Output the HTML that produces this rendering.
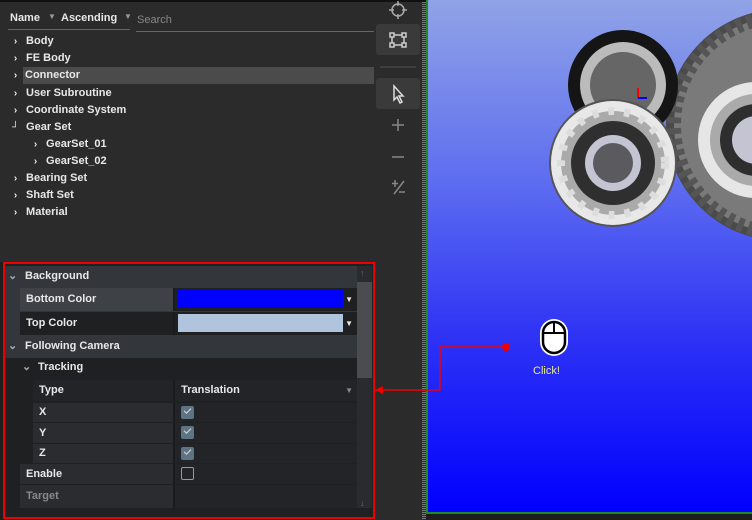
<!DOCTYPE html>
<html><head><style>
*{margin:0;padding:0;box-sizing:border-box}
body{width:752px;height:520px;background:#1e1e1e;position:relative;overflow:hidden;font-family:"Liberation Sans",sans-serif;font-size:11px;font-weight:bold;color:#e8e8e8}
.a{position:absolute}
.tree div{position:absolute;left:0;height:17px;line-height:17px}
.tree span{display:inline-block;width:15px;text-align:center;font-size:10px}
.row{position:absolute;left:4px;width:353px;height:21px;line-height:21px}
.lab{position:absolute;left:16px;width:153px;top:0;bottom:0;background:#2a2c30;padding-left:6px}
.val{position:absolute;left:169px;right:0;top:0;bottom:0;background:#232427;border-left:2px solid #1b1b1b}
.cb{position:absolute;left:6px;top:4px;width:13px;height:13px;background:#5e7482;border-radius:2px}
.cb:after{content:"";position:absolute;left:3px;top:2px;width:6px;height:3px;border-left:1.5px solid #ddd;border-bottom:1.5px solid #ddd;transform:rotate(-45deg)}
</style></head><body>
<div class="a" style="left:0;top:0;width:374px;height:262px;background:#2b2b2b"></div>
<div class="a" style="left:374px;top:0;width:48px;height:520px;background:#2b2b2b"></div>
<div class="a" style="left:422px;top:0;width:4px;height:520px;background:repeating-linear-gradient(#777 0 1px,#2b2b2b 1px 2px)"></div>
<div class="a" style="left:0;top:0;width:426px;height:2px;background:#111"></div>
<div class="a" style="left:10px;top:12px">Name</div>
<div class="a" style="left:48px;top:12px;color:#999;font-size:8px">▼</div>
<div class="a" style="left:61px;top:12px">Ascending</div>
<div class="a" style="left:124px;top:12px;color:#999;font-size:8px">▼</div>
<div class="a" style="left:8px;top:29px;width:122px;height:1px;background:#666"></div>
<div class="a" style="left:137px;top:14px;color:#888;font-weight:normal">Search</div>
<div class="a" style="left:136px;top:31px;width:238px;height:1px;background:#666"></div>
<div class="tree a" style="left:8px;top:33px;width:366px">
<div style="top:0"><span>›</span>&nbsp;Body</div>
<div style="top:17px"><span>›</span>&nbsp;FE Body</div>
<div style="top:34px;left:15px;width:351px;background:#4b4b4b;padding-left:2px">Connector</div>
<div style="top:34px"><span>›</span></div>
<div style="top:52px"><span>›</span>&nbsp;User Subroutine</div>
<div style="top:69px"><span>›</span>&nbsp;Coordinate System</div>
<div style="top:86px"><span>┘</span>&nbsp;Gear Set</div>
<div style="top:103px;left:20px"><span>›</span>&nbsp;GearSet_01</div>
<div style="top:120px;left:20px"><span>›</span>&nbsp;GearSet_02</div>
<div style="top:137px"><span>›</span>&nbsp;Bearing Set</div>
<div style="top:154px"><span>›</span>&nbsp;Shaft Set</div>
<div style="top:171px"><span>›</span>&nbsp;Material</div>
</div>
<svg class="a" style="left:374px;top:0" width="48" height="200" fill="none" stroke="#aaa" stroke-width="1.5">
<circle cx="24" cy="10" r="6"/><path d="M24 1v5M24 14v5M15 10h5M28 10h5"/>
<rect x="2" y="24" width="44" height="31" rx="3" fill="#3a3a3a" stroke="none"/>
<rect x="18" y="35" width="12" height="10" stroke="#ccc"/><rect x="16" y="33" width="4" height="4" fill="#3a3a3a" stroke="#ccc"/><rect x="28" y="33" width="4" height="4" fill="#3a3a3a" stroke="#ccc"/><rect x="16" y="43" width="4" height="4" fill="#3a3a3a" stroke="#ccc"/><rect x="28" y="43" width="4" height="4" fill="#3a3a3a" stroke="#ccc"/>
<path d="M6 67h36" stroke="#444"/>
<rect x="2" y="78" width="44" height="31" rx="3" fill="#3a3a3a" stroke="none"/>
<path d="M20 86l0 14 3-3 3 6 2-1-3-6 4 0z" stroke="#ddd"/>
<path d="M24 119v12M18 125h12M18 157h12" stroke="#888"/>
<path d="M21 180v7M18 183.5h6M30 181l-10 13M25 192h6" stroke="#888"/>
</svg>
<div class="a" style="left:426px;top:0;width:326px;height:514px;background:linear-gradient(#90a3e6,#5e6ef0 35%,#2f34f4 65%,#0000ff);border-left:2px solid #1a8a2a;border-bottom:2px solid #1a8a2a"></div>
<svg class="a" style="left:426px;top:0" width="326" height="260">
<circle cx="356" cy="125" r="116" fill="#4a4a4a"/>
<circle cx="356" cy="125" r="108" fill="#7a7a7a" stroke="#555" stroke-width="14" stroke-dasharray="6 5"/>
<circle cx="330" cy="140" r="58" fill="#e6e6e6"/><circle cx="330" cy="140" r="46" fill="#aaa"/><circle cx="330" cy="140" r="36" fill="#2e2e2e"/><circle cx="330" cy="140" r="24" fill="#c4c4d2"/>
<circle cx="197" cy="85" r="55" fill="#151515"/><circle cx="197" cy="85" r="43" fill="#bbb"/><circle cx="197" cy="85" r="33" fill="#666"/>
<circle cx="187" cy="163" r="64" fill="#555"/>
<circle cx="187" cy="163" r="62" fill="#e8e8e8"/><circle cx="187" cy="163" r="52" fill="#aaa" stroke="#ddd" stroke-width="8" stroke-dasharray="6 10"/>
<circle cx="187" cy="163" r="42" fill="#2f2f2f"/><circle cx="187" cy="163" r="28" fill="#c4c4d2"/><circle cx="187" cy="163" r="20" fill="#5a5a5f"/>
<path d="M212 88v10" stroke="red" stroke-width="2"/><path d="M212 98h9" stroke="blue" stroke-width="2"/>
</svg>
<svg class="a" style="left:374px;top:340px" width="200" height="60">
<path d="M1 50H66V7H132" stroke="#e00" stroke-width="1.5" fill="none"/><circle cx="132" cy="7" r="4" fill="#e00"/>
<path d="M1 50l8-4v8z" fill="#e00"/>
</svg>
<svg class="a" style="left:538px;top:318px" width="32" height="40"><rect x="2" y="1" width="28" height="37" rx="14" fill="#fff"/><rect x="5" y="4" width="22" height="31" rx="11" fill="#fff" stroke="#000" stroke-width="2.5"/><path d="M16 4v11M5 15h22" stroke="#000" stroke-width="2"/></svg>
<div class="a" style="left:533px;top:365px;color:#e8e89a;font-weight:normal;font-size:11px">Click!</div>
<div class="a" style="left:3px;top:262px;width:372px;height:257px;background:#1f2022;border:2px solid #e00"></div>
<div class="a" style="left:5px;top:266px;width:352px;height:92px;background:#33363b"></div>
<div class="a" style="left:357px;top:266px;width:15px;height:242px;background:#2a2b2e"></div>
<div class="a" style="left:357px;top:282px;width:15px;height:96px;background:#4a4c50"></div>
<div class="a" style="left:360px;top:268px;color:#666;font-size:9px">↑</div>
<div class="a" style="left:360px;top:498px;color:#666;font-size:9px">↓</div>
<div class="row" style="top:266px"><span style="position:absolute;left:4px;color:#aaa">⌄</span><span style="position:absolute;left:21px">Background</span></div>
<div class="row" style="top:288px;height:23px;line-height:23px"><div class="lab" style="background:#3e4146">Bottom Color</div><div class="val" style="background:#1f2022"><div class="a" style="left:3px;top:2px;width:165px;height:18px;background:#0000ff"></div><span style="position:absolute;right:4px;font-size:8px">▼</span></div></div>
<div class="row" style="top:312px;height:23px;line-height:23px"><div class="lab" style="background:#1f2022">Top Color</div><div class="val" style="background:#1f2022"><div class="a" style="left:3px;top:2px;width:165px;height:18px;background:#b0c4de"></div><span style="position:absolute;right:4px;font-size:8px">▼</span></div></div>
<div class="row" style="top:336px"><span style="position:absolute;left:4px;color:#aaa">⌄</span><span style="position:absolute;left:21px">Following Camera</span></div>
<div class="row" style="top:357px"><span style="position:absolute;left:18px;color:#aaa">⌄</span><span style="position:absolute;left:34px">Tracking</span></div>
<div class="row" style="top:380px"><div class="lab" style="left:29px;width:140px;background:#232427">Type</div><div class="val">&nbsp;&nbsp;Translation<span style="position:absolute;right:4px;color:#888;font-size:8px">▼</span></div></div>
<div class="row" style="top:403px;height:19px"><div class="lab" style="left:29px;width:140px;line-height:19px">X</div><div class="val"><div class="cb" style="top:3px"></div></div></div>
<div class="row" style="top:423px;height:20px"><div class="lab" style="left:29px;width:140px;line-height:20px">Y</div><div class="val"><div class="cb" style="top:3px"></div></div></div>
<div class="row" style="top:444px;height:19px"><div class="lab" style="left:29px;width:140px;line-height:19px">Z</div><div class="val"><div class="cb" style="top:3px"></div></div></div>
<div class="row" style="top:464px;height:20px"><div class="lab" style="line-height:20px">Enable</div><div class="val"><div class="a" style="left:6px;top:3px;width:13px;height:13px;border:1.5px solid #999;border-radius:2px"></div></div></div>
<div class="row" style="top:485px;height:23px"><div class="lab" style="color:#888;line-height:23px">Target</div><div class="val"></div></div>
</body></html>
